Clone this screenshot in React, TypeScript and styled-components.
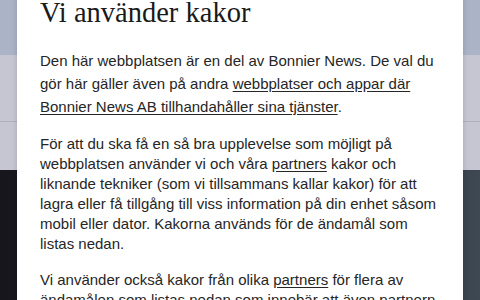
import React from "react";
import styled, { createGlobalStyle } from "styled-components";

const Global = createGlobalStyle`
  html, body { margin: 0; padding: 0; width: 480px; height: 300px; overflow: hidden; }
  body { font-family: "Liberation Sans", Arial, sans-serif; }
`;

const Page = styled.div`
  position: relative;
  width: 480px;
  height: 300px;
  overflow: hidden;
  display: grid;
  grid-template-rows: 55px 66px 49px 1fr;
`;

const TopBar = styled.div`
  background: #abb3c7;
`;

const Band = styled.div<{ $rule?: boolean }>`
  background: #c6c6d3;
  border-top: ${(p) => (p.$rule ? "1px solid #b1b1be" : "none")};
`;

const Hero = styled.div`
  background: linear-gradient(90deg, #17161c 0%, #1c1c22 20%, #2c333b 60%, #3d4852 100%);
`;

const Modal = styled.div`
  position: absolute;
  left: 17px;
  top: -4px;
  width: 446px;
  box-sizing: border-box;
  padding: 0 23px;
  background: #ffffff;
  box-shadow: 0 0 6px rgba(0, 0, 0, 0.15);
`;

const Title = styled.h1`
  margin: 0 0 19px;
  font-family: "Liberation Serif", "Times New Roman", serif;
  font-weight: 400;
  font-size: 28.5px;
  line-height: 34px;
  color: #1a1a1a;
`;

const Para = styled.p<{ $lead?: boolean }>`
  margin: 0 0 16px;
  font-size: 15px;
  line-height: ${(p) => (p.$lead ? "23px" : "20px")};
  color: #262626;
`;

const Link = styled.a`
  color: #262626;
  text-decoration: underline;
  text-underline-offset: 2px;
`;

export default function App() {
  return (
    <>
      <Global />
      <Page>
        <TopBar />
        <Band />
        <Band $rule />
        <Hero />
        <Modal>
          <Title>Vi använder kakor</Title>
          <Para $lead>
            Den här webbplatsen är en del av Bonnier News. De val du gör här gäller även på andra{" "}
            <Link href="#">webbplatser och appar där Bonnier News AB tillhandahåller sina tjänster</Link>.
          </Para>
          <Para>
            För att du ska få en så bra upplevelse som möjligt på webbplatsen använder vi och våra{" "}
            <Link href="#">partners</Link> kakor och liknande tekniker (som vi tillsammans kallar kakor) för att
            lagra eller få tillgång till viss information på din enhet såsom mobil eller dator. Kakorna används
            för de ändamål som listas nedan.
          </Para>
          <Para>
            Vi använder också kakor från olika <Link href="#">partners</Link> för flera av ändamålen som listas
            nedan som innebär att även partnern får tillgång till information om dig.
          </Para>
        </Modal>
      </Page>
    </>
  );
}
